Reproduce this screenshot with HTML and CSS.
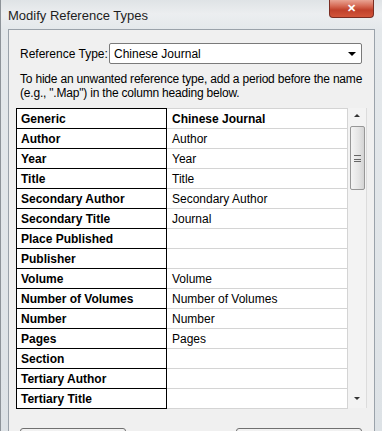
FILE: index.html
```html
<!DOCTYPE html>
<html>
<head>
	<meta charset="UTF-8" />
	<title>Modify Reference Types</title>
	<link rel="stylesheet" href="styles.css">
</head>
<body>
	<div class="window">
		<!--title bar-->
		<div class="titlebar">
			<span class="caption">Modify Reference Types</span>
			<span class="close">&#x2715;</span>
		</div>

		<div class="client">
			<!--reference type picker-->
			<div class="picker">
				<span class="label">Reference Type:</span>
				<div class="select">
					<span>Chinese Journal</span>
					<span class="arrow"></span>
				</div>
			</div>

			<p class="hint">To hide an unwanted reference type, add a period before the name<br>(e.g., ".Map") in the column heading below.</p>

			<!--field grid-->
			<div class="grid">
				<table>
					<tbody>
						<tr><td class="name">Generic</td><td class="val head">Chinese Journal</td></tr>
						<tr><td class="name">Author</td><td class="val">Author</td></tr>
						<tr><td class="name">Year</td><td class="val">Year</td></tr>
						<tr><td class="name">Title</td><td class="val">Title</td></tr>
						<tr><td class="name">Secondary Author</td><td class="val">Secondary Author</td></tr>
						<tr><td class="name">Secondary Title</td><td class="val">Journal</td></tr>
						<tr><td class="name">Place Published</td><td class="val"></td></tr>
						<tr><td class="name">Publisher</td><td class="val"></td></tr>
						<tr><td class="name">Volume</td><td class="val">Volume</td></tr>
						<tr><td class="name">Number of Volumes</td><td class="val">Number of Volumes</td></tr>
						<tr><td class="name">Number</td><td class="val">Number</td></tr>
						<tr><td class="name">Pages</td><td class="val">Pages</td></tr>
						<tr><td class="name">Section</td><td class="val"></td></tr>
						<tr><td class="name">Tertiary Author</td><td class="val"></td></tr>
						<tr><td class="name">Tertiary Title</td><td class="val"></td></tr>
					</tbody>
				</table>
				<!--scrollbar-->
				<div class="scroll">
					<span class="up"></span>
					<div class="thumb">
						<span class="grip"></span>
					</div>
					<span class="down"></span>
				</div>
			</div>

			<!--buttons, cut off at the bottom-->
			<div class="buttons">
				<span class="btn small"></span>
				<span class="btn wide"></span>
			</div>
		</div>
	</div>
</body>
</html>
```

FILE: styles.css
```css
body {
	margin: 0;
	font-family: "Liberation Sans", Arial, sans-serif;
	font-size: 12px;
	color: #000;
	overflow: hidden;
}
.window {
	width: 382px;
	height: 431px;
	display: flex;
	flex-direction: column;
	background: linear-gradient(180deg, #dfe3e6 0px, #eceef0 14px, #e4e8eb 30px, #dde2e6 100%);
	border-left: 1px solid #8d9399;
	box-sizing: border-box;
	overflow: hidden;
}
.titlebar {
	height: 29px;
	display: flex;
	align-items: flex-start;
	justify-content: space-between;
	flex-shrink: 0;
}
.caption {
	font-family: "Liberation Sans", Arial, sans-serif;
	font-size: 13px;
	color: #1e1e1e;
	margin: 8px 0 0 7px;
}
.close {
	width: 45px;
	height: 18px;
	margin-right: 8px;
	border: 1px solid #7a2d22;
	border-top: none;
	border-radius: 0 0 4px 4px;
	background: linear-gradient(180deg, #e9a393 0px, #d66a55 6px, #c0412b 10px, #d5583c 18px);
	color: #fff;
	font-size: 11px;
	font-weight: bold;
	text-align: center;
	line-height: 17px;
	box-sizing: border-box;
}
.client {
	flex: 1;
	margin: 0 7px 0 7px;
	background: #f0f0f0;
	border: 1px solid #9aa2aa;
	border-bottom: none;
	padding: 0 7px;
}
.picker {
	display: flex;
	align-items: center;
	margin-top: 13px;
	padding-left: 4px;
}
.label {
	width: 89px;
}
.select {
	width: 253px;
	height: 21px;
	display: flex;
	align-items: center;
	justify-content: space-between;
	border: 1px solid #7a7a7a;
	border-radius: 2px;
	background: #fff;
	box-sizing: border-box;
	padding: 0 5px 0 4px;
}
.arrow {
	width: 0;
	height: 0;
	border-left: 4px solid transparent;
	border-right: 4px solid transparent;
	border-top: 4px solid #000;
}
.hint {
	margin: 8px 0 0 0;
	padding-left: 4px;
	line-height: 14px;
	letter-spacing: -0.2px;
	white-space: nowrap;
}
.grid {
	display: flex;
	margin-top: 8px;
	width: 351px;
	height: 300px;
	background: #fff;
}
table {
	border-collapse: collapse;
	width: 332px;
	table-layout: fixed;
}
td {
	height: 19px;
	padding: 0 4px;
	white-space: nowrap;
	overflow: hidden;
}
td.name {
	width: 141px;
	border: 1px solid #000;
	font-weight: bold;
	background: #fff;
}
td.val {
	border-bottom: 1px solid #d4d4d4;
	border-right: 1px solid #d4d4d4;
	padding-left: 5px;
}
td.head {
	font-weight: bold;
	border-top: 1px solid #d4d4d4;
}
.scroll {
	width: 19px;
	display: flex;
	flex-direction: column;
	align-items: center;
	background: #f3f3f3;
	border-right: 1px solid #dcdcdc;
	box-sizing: border-box;
}
.up, .down {
	width: 0;
	height: 0;
	border-left: 3px solid transparent;
	border-right: 3px solid transparent;
}
.up {
	margin-top: 6px;
	border-bottom: 3px solid #333;
}
.down {
	margin-top: auto;
	margin-bottom: 8px;
	border-top: 3px solid #333;
}
.thumb {
	width: 15px;
	height: 64px;
	margin-top: 9px;
	border: 1px solid #979797;
	border-radius: 2px;
	background: linear-gradient(90deg, #f4f4f4, #e4e4e4 60%, #d4d4d4);
	box-sizing: border-box;
	display: flex;
	align-items: center;
	justify-content: center;
}
.grip {
	width: 7px;
	height: 7px;
	border-top: 1px solid #666;
	border-bottom: 1px solid #666;
	background: linear-gradient(180deg, transparent 3px, #666 3px, #666 4px, transparent 4px);
	box-sizing: border-box;
}
.buttons {
	display: flex;
	justify-content: space-between;
	margin-top: 20px;
	padding: 0 5px 0 4px;
}
.btn {
	height: 24px;
	border: 1px solid #707070;
	border-radius: 3px;
	background: linear-gradient(180deg, #f2f2f2, #ebebeb 50%, #dddddd);
}
.small {
	width: 104px;
}
.wide {
	width: 124px;
}
```
